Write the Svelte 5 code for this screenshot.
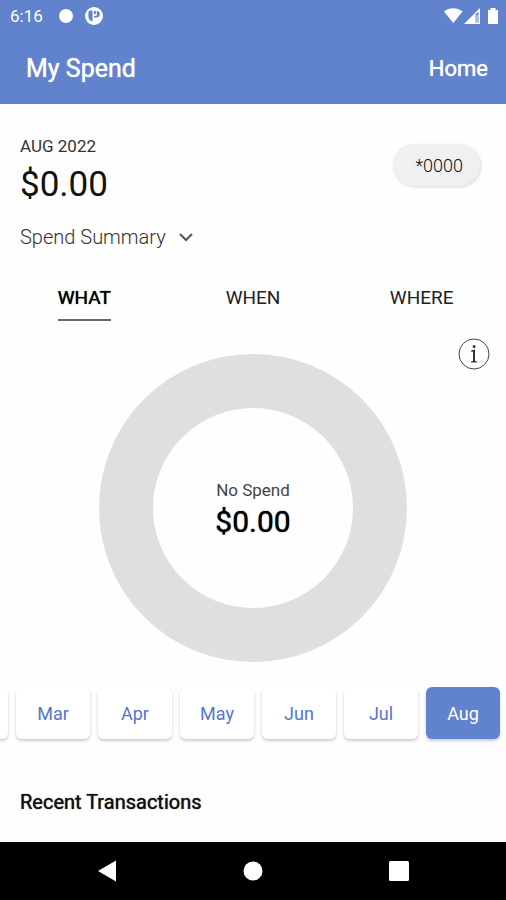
<script lang="ts">
  const tabs = ['WHAT', 'WHEN', 'WHERE'];
  const months = ['Mar', 'Apr', 'May', 'Jun', 'Jul', 'Aug'];

  let activeTab = $state('WHAT');
  let activeMonth = $state('Aug');
</script>

<div class="screen">
  <div class="statusbar">
    <span class="clock">6:16</span>
    <svg class="dot" width="14" height="14" viewBox="0 0 14 14" aria-hidden="true">
      <circle cx="7" cy="7" r="7" />
    </svg>
    <svg width="18" height="18" viewBox="0 0 18 18" aria-hidden="true">
      <circle cx="9" cy="9" r="9" />
      <path class="cut" d="M7.500 3.600v10.800C4.800 13.800 3.400 12 3.400 9.500V4.800L5 3.600z" />
      <path class="cut" d="M9 3.800h1.800v3.400H9z M11.800 4h1c1.300.5 2 1.600 2 3 0 2.300-1.600 3.600-3.600 3.600H9V9h1.500c.8 0 1.300-.5 1.300-1.300z" />
    </svg>
    <div class="signals">
      <svg width="54" height="18" viewBox="0 0 54 18" aria-hidden="true">
        <path d="M0 4.500C5 0 13.500 0 18.500 4.500L9.300 16z" />
        <path d="M36 1v16H20z" />
        <path class="cut" d="M31.500 7.500l3-3v11h-3z" />
        <path d="M32.500 8h1v7h-1z" />
        <path d="M46.500 1h5v2h2.500v14H44V3h2.500z" />
      </svg>
    </div>
  </div>

  <header class="appbar">
    <h1>My Spend</h1>
    <a href="#home">Home</a>
  </header>

  <main>
    <section class="summary">
      <div>
        <div class="period">AUG 2022</div>
        <div class="total">$0.00</div>
      </div>
      <button type="button" class="card-pill">*0000</button>
    </section>

    <button type="button" class="view-select">
      Spend Summary
      <svg width="16" height="10" viewBox="0 0 16 10" aria-hidden="true">
        <path d="M2 2l6 6 6-6" />
      </svg>
    </button>

    <div class="tabs" role="tablist">
      {#each tabs as tab}
        <button
          type="button"
          role="tab"
          class="tab"
          class:active={activeTab === tab}
          aria-selected={activeTab === tab}
          onclick={() => (activeTab = tab)}
        >
          <span>{tab}</span>
        </button>
      {/each}
    </div>

    <div class="info-row">
      <button type="button" class="info" aria-label="Information">
        <svg width="32" height="32" viewBox="0 0 32 32" aria-hidden="true">
          <circle cx="16" cy="16" r="15" />
          <path class="solid" d="M14.600 8.500a1.500 1.500 0 1 1 3 0 1.500 1.500 0 0 1-3 0z M13 12.400l4-.8v11.400l2 .6v.9h-6v-.9l2-.6v-9.200l-2-.4z" />
        </svg>
      </button>
    </div>

    <div class="donut">
      <span class="donut-label">No Spend</span>
      <span class="donut-value">$0.00</span>
    </div>

    <div class="months">
      <button type="button" class="month" aria-label="February"></button>
      {#each months as month}
        <button
          type="button"
          class="month"
          class:active={activeMonth === month}
          onclick={() => (activeMonth = month)}
        >
          {month}
        </button>
      {/each}
    </div>

    <h2>Recent Transactions</h2>
  </main>

  <nav class="navbar">
    <button type="button" aria-label="Back">
      <svg width="20" height="22" viewBox="0 0 20 22"><path d="M1 11L19 .5v21z" /></svg>
    </button>
    <button type="button" aria-label="Home screen">
      <svg width="20" height="20" viewBox="0 0 20 20"><circle cx="10" cy="10" r="9.500" /></svg>
    </button>
    <button type="button" aria-label="Recent apps">
      <svg width="20" height="20" viewBox="0 0 20 20"><rect width="20" height="20" rx="1.500" /></svg>
    </button>
  </nav>
</div>

<style>
  :global(body) {
    margin: 0;
    background: #fefefe;
  }

  .screen {
    display: flex;
    flex-direction: column;
    min-height: 100vh;
    font-family: Roboto, 'Liberation Sans', sans-serif;
    color: #111;
    overflow: hidden;
  }

  button {
    padding: 0;
    border: 0;
    background: none;
    font: inherit;
    color: inherit;
    cursor: pointer;
  }

  svg {
    display: block;
  }

  .statusbar {
    display: flex;
    align-items: center;
    height: 32px;
    padding: 0 8px 0 10px;
    background: #6182cd;
    color: #fff;
  }

  .statusbar svg {
    fill: #fff;
  }

  .statusbar .cut {
    fill: #6182cd;
  }

  .clock {
    font-size: 17px;
  }

  .dot {
    margin: 0 12px 0 16px;
  }

  .signals {
    margin-left: auto;
  }

  .appbar {
    display: flex;
    align-items: center;
    justify-content: space-between;
    height: 72px;
    padding: 0 18px 0 26px;
    background: #6182cd;
    color: #fff;
  }

  h1,
  h2,
  .appbar a,
  .tab.active,
  .donut-value {
    font-weight: 400;
    text-shadow: 0 0 1px currentColor;
  }

  h1 {
    margin: 0;
    font-size: 25px;
  }

  .appbar a {
    font-size: 22px;
    color: inherit;
    text-decoration: none;
  }

  main {
    flex: 1;
    padding-top: 31px;
  }

  .summary {
    display: flex;
    align-items: flex-start;
    justify-content: space-between;
    padding: 0 26px 0 20px;
  }

  .period {
    font-size: 17px;
    line-height: 22px;
    color: #333;
  }

  .total {
    font-size: 35px;
    line-height: 56px;
  }

  .card-pill {
    height: 42px;
    margin-top: 9px;
    padding: 0 17px 0 22px;
    border-radius: 21px;
    background: #f0f0f0;
    box-shadow: 1px 1px 3px rgba(0, 0, 0, 0.15);
    font-size: 18px;
    font-weight: 300;
    color: #111;
  }

  .view-select {
    display: flex;
    align-items: center;
    gap: 12px;
    margin: 9px 20px 0;
    font-size: 20px;
    font-weight: 300;
    line-height: 30px;
    color: #333;
  }

  .view-select svg {
    fill: none;
    stroke: #555;
    stroke-width: 2;
  }

  .tabs {
    display: flex;
    margin-top: 29px;
  }

  .tab {
    flex: 1;
    font-size: 19px;
    line-height: 34px;
    color: #222;
  }

  .tab span {
    display: inline-block;
    padding-bottom: 4px;
    border-bottom: 2px solid transparent;
  }

  .tab.active {
    color: #000;
  }

  .tab.active span {
    border-color: #666;
  }

  .info-row {
    display: flex;
    justify-content: flex-end;
    padding: 17px 16px 0;
  }

  .info svg {
    fill: none;
    stroke: #444;
  }

  .info .solid {
    fill: #333;
    stroke: none;
  }

  .donut {
    box-sizing: border-box;
    display: flex;
    flex-direction: column;
    align-items: center;
    justify-content: center;
    width: 308px;
    height: 308px;
    margin: -16px auto 0;
    border: 54px solid #dfdfdf;
    border-radius: 50%;
  }

  .donut-label {
    font-size: 17px;
    line-height: 28px;
    color: #444;
  }

  .donut-value {
    font-size: 30px;
    line-height: 36px;
    color: #000;
  }

  .months {
    display: flex;
    justify-content: flex-end;
    gap: 8px;
    margin-top: 15px;
    padding: 10px 6px;
    overflow: hidden;
  }

  .month {
    flex: none;
    width: 74px;
    height: 52px;
    border-radius: 6px;
    background: #fff;
    box-shadow: 0 2px 3px rgba(0, 0, 0, 0.2);
    font-size: 18px;
    color: #5675cc;
  }

  .month.active {
    background: #6182cd;
    color: #fff;
  }

  h2 {
    margin: 39px 20px 24px;
    font-size: 20px;
    line-height: 28px;
  }

  .navbar {
    display: flex;
    justify-content: center;
    align-items: center;
    gap: 126px;
    height: 58px;
    background: #000;
  }

  .navbar svg {
    fill: #fff;
  }
</style>
